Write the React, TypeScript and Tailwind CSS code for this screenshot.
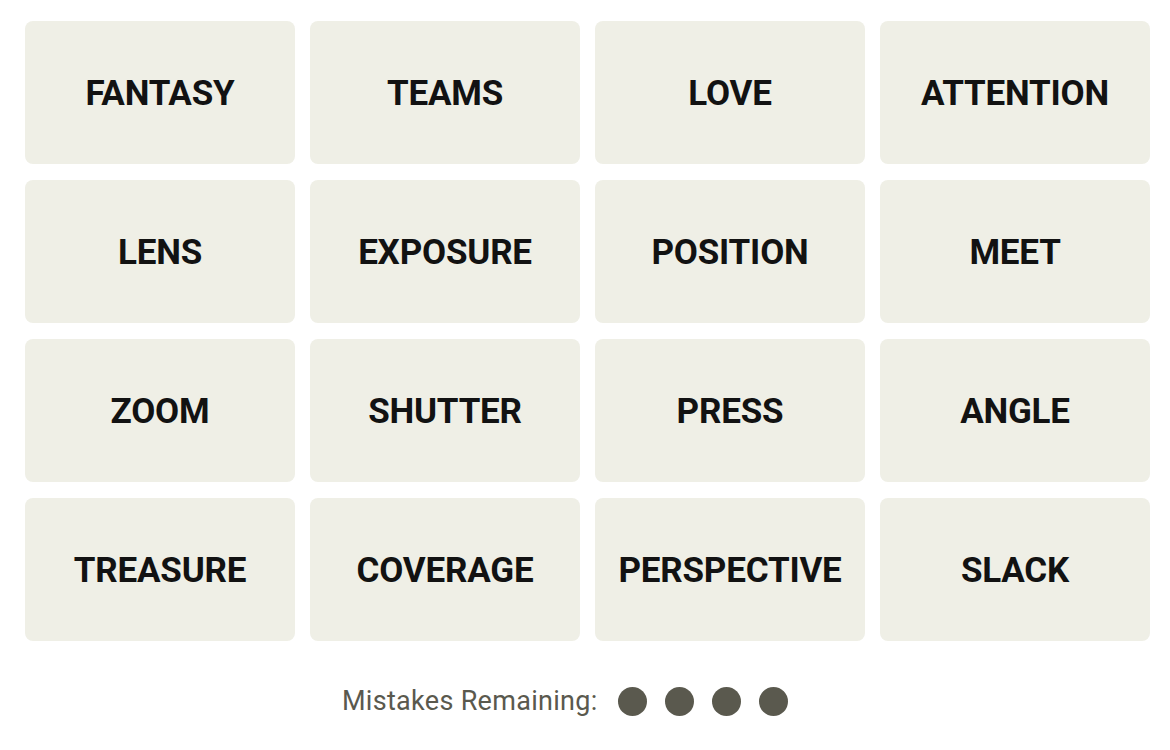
const words = [
  'FANTASY', 'TEAMS', 'LOVE', 'ATTENTION',
  'LENS', 'EXPOSURE', 'POSITION', 'MEET',
  'ZOOM', 'SHUTTER', 'PRESS', 'ANGLE',
  'TREASURE', 'COVERAGE', 'PERSPECTIVE', 'SLACK',
];

export default function App() {
  return (
    <div className="w-[1170px] h-[750px] bg-white" style={{ fontFamily: 'Roboto, "Liberation Sans", sans-serif' }}>
      <div className="pt-[21px] pl-[25px]">
        <div className="grid grid-cols-[repeat(4,270px)] auto-rows-[143px] gap-x-[15px] gap-y-[16px]">
          {words.map((w) => (
            <button
              key={w}
              className="flex items-center justify-center pt-[3px] rounded-[8px] bg-[#efefe6] text-[#121212] text-[35px] font-bold tracking-[-0.2px]"
            >
              {w}
            </button>
          ))}
        </div>
      </div>

      <div className="flex items-center pl-[342px] mt-[40px]">
        <span className="text-[27px] text-[#5a594e] tracking-[0.3px]">Mistakes Remaining:</span>
        <div className="flex gap-[18px] ml-[20px]">
          <span className="w-[29px] h-[29px] rounded-full bg-[#5a594e]" />
          <span className="w-[29px] h-[29px] rounded-full bg-[#5a594e]" />
          <span className="w-[29px] h-[29px] rounded-full bg-[#5a594e]" />
          <span className="w-[29px] h-[29px] rounded-full bg-[#5a594e]" />
        </div>
      </div>
    </div>
  );
}
